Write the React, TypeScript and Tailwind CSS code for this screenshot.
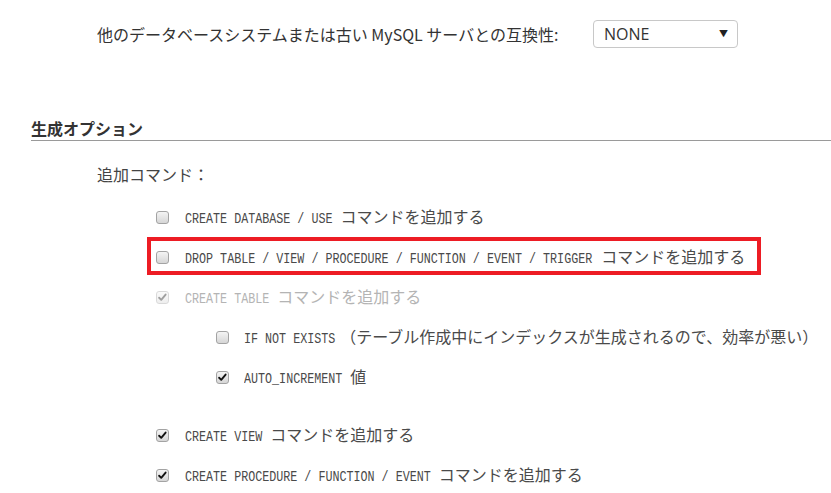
const jp = { fontFamily: '"Noto Sans CJK JP", "Noto Sans", sans-serif' };

interface CheckBoxProps {
  checked?: boolean;
  disabled?: boolean;
}

function CheckBox({ checked, disabled }: CheckBoxProps) {
  return (
    <span
      className={`relative inline-flex h-[13px] w-[13px] shrink-0 items-center justify-center rounded-[3px] border border-[#a3a3a3] bg-gradient-to-b from-[#f4f4f4] to-[#d6d6d6] ${
        disabled ? "opacity-40" : ""
      }`}
    >
      {checked && (
        <svg viewBox="0 0 13 13" className="h-[11px] w-[11px]">
          <path d="M2.5 6.8 L5 9.3 L10.2 3" fill="none" stroke="#111" strokeWidth="2.2" strokeLinecap="round" strokeLinejoin="round" />
        </svg>
      )}
    </span>
  );
}

// narrow monospace: Liberation Mono squeezed horizontally, layout width corrected
function Mono({ text, className = "" }: { text: string; className?: string }) {
  const full = text.length * 9; // 15px * 0.6em advance
  return (
    <span
      className={`inline-block origin-left scale-x-[0.78] whitespace-pre text-[15px] leading-[20px] ${className}`}
      style={{ fontFamily: '"Liberation Mono", monospace', marginRight: -full * 0.22 }}
    >
      {text}
    </span>
  );
}

interface LineProps {
  code: string;
  label: string;
  checked?: boolean;
  disabled?: boolean;
  labelGap?: string;
  codeGap?: string;
}

function Line({ code, label, checked, disabled, labelGap = "ml-2", codeGap = "ml-4" }: LineProps) {
  const color = disabled ? "text-[#b4b4b4]" : "text-[#4a4a4a]";
  return (
    <>
      <CheckBox checked={checked} disabled={disabled} />
      <span className={`${codeGap} flex items-baseline pt-[2px]`}>
        <Mono text={code} className={color} />
        <span className={`${labelGap} whitespace-nowrap text-[16px] leading-[20px] ${color}`} style={jp}>
          {label}
        </span>
      </span>
    </>
  );
}

export default function App() {
  return (
    <div className="h-[493px] w-[831px] overflow-hidden bg-white text-[#333]" style={jp}>
      {/* compatibility select */}
      <div className="flex items-center pl-[97px] pt-[20px]">
        <span className="w-[496px] whitespace-nowrap text-[16px] leading-[28px]">
          他のデータベースシステムまたは古い MySQL サーバとの互換性:
        </span>
        <div className="flex h-[28px] w-[145px] items-center justify-between rounded-[4px] border border-[#c8c8c8] pl-[10px] pr-[9px]">
          <span className="text-[16px] text-[#333]" style={{ fontFamily: '"Open Sans", "Noto Sans", sans-serif' }}>
            NONE
          </span>
          <span className="text-[9px] text-[#222]">▼</span>
        </div>
      </div>

      {/* section heading */}
      <div className="ml-[31px] mt-[68px] border-b border-[#9a9a9a]">
        <h2 className="text-[16px] font-bold leading-[24px] text-[#333]">生成オプション</h2>
      </div>

      <div className="ml-[97px] mt-[21px] text-[16px] leading-[24px] text-[#444]">追加コマンド：</div>

      <div className="ml-[156px] mt-[11px] flex flex-col">
        <div className="flex h-[40px] items-center">
          <Line code="CREATE DATABASE / USE" label="コマンドを追加する" />
        </div>
        <div className="-ml-[9px] flex h-[38px] w-[614px] items-center border-4 border-[#ed1c24] pl-[5px] pt-[2px]">
          <Line code="DROP TABLE / VIEW / PROCEDURE / FUNCTION / EVENT / TRIGGER" label="コマンドを追加する" labelGap="ml-[9px]" />
        </div>
        <div className="mt-[2px] flex h-[40px] items-center">
          <Line code="CREATE TABLE" label="コマンドを追加する" checked disabled />
        </div>
        <div className="ml-[60px] flex flex-col">
          <div className="flex h-[40px] items-center">
            <Line code="IF NOT EXISTS" label="（テーブル作成中にインデックスが生成されるので、効率が悪い）" codeGap="ml-[15px]" labelGap="ml-[5px]" />
          </div>
          <div className="flex h-[40px] items-center">
            <Line code="AUTO_INCREMENT" label="値" checked codeGap="ml-[15px]" />
          </div>
        </div>
        <div className="mt-[18px] flex h-[40px] items-center">
          <Line code="CREATE VIEW" label="コマンドを追加する" checked />
        </div>
        <div className="flex h-[40px] items-center">
          <Line code="CREATE PROCEDURE / FUNCTION / EVENT" label="コマンドを追加する" checked />
        </div>
      </div>
    </div>
  );
}
